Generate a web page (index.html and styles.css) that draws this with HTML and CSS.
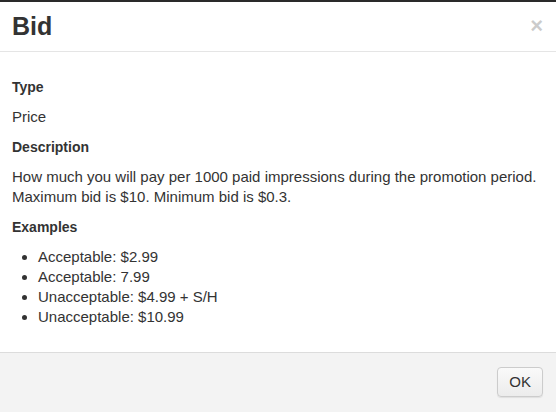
FILE: index.html
```html
<!DOCTYPE html>
<html>
<head>
<meta charset="utf-8">
<link rel="stylesheet" href="styles.css">
</head>
<body>
<div class="modal">
  <div class="modal-header">
    <h3 class="modal-title">Bid</h3>
    <button class="close" type="button">×</button>
  </div>
  <div class="modal-body">
    <div class="label">Type</div>
    <p>Price</p>
    <div class="label">Description</div>
    <p>How much you will pay per 1000 paid impressions during the promotion period. Maximum bid is $10. Minimum bid is $0.3.</p>
    <div class="label">Examples</div>
    <ul>
      <li>Acceptable: $2.99</li>
      <li>Acceptable: 7.99</li>
      <li>Unacceptable: $4.99 + S/H</li>
      <li>Unacceptable: $10.99</li>
    </ul>
  </div>
  <div class="modal-footer">
    <button class="btn" type="button">OK</button>
  </div>
</div>
</body>
</html>
```
FILE: styles.css
```css
html, body {
  margin: 0;
  padding: 0;
  height: 100%;
}
body {
  background: #2a2a2a;
  font-family: "Liberation Sans", Arial, sans-serif;
  font-size: 15px;
  line-height: 20px;
  color: #333;
  overflow: hidden;
}
.modal {
  margin-top: 2px;
  background: #fff;
  display: flex;
  flex-direction: column;
  height: calc(100% - 2px);
}
.modal-header {
  display: flex;
  justify-content: space-between;
  align-items: flex-start;
  padding: 10px 13px 10px 12px;
  border-bottom: 1px solid #e5e5e5;
}
.modal-title {
  margin: 0;
  font-size: 25px;
  line-height: 29px;
  font-weight: bold;
  color: #333;
}
.close {
  background: none;
  border: 0;
  padding: 0;
  margin-top: 3px;
  font-family: "Liberation Sans", Arial, sans-serif;
  font-size: 22px;
  font-weight: bold;
  line-height: 1;
  color: #000;
  opacity: 0.2;
}
.modal-body {
  padding: 25px 12px 15px 12px;
}
.label {
  font-weight: bold;
  font-size: 14px;
  margin-bottom: 10px;
}
p {
  margin: 0 0 10px;
}
ul {
  margin: 0 0 10px;
  padding-left: 26px;
}
.modal-footer {
  flex: 1;
  background: #f3f3f3;
  border-top: 1px solid #dcdcdc;
  padding: 14px 13px 15px;
  display: flex;
  justify-content: flex-end;
  align-items: flex-start;
}
.btn {
  font-family: "Liberation Sans", Arial, sans-serif;
  font-size: 15px;
  line-height: 20px;
  color: #333;
  padding: 4px 11px;
  height: 30px;
  border: 1px solid #ccc;
  border-radius: 4px;
  background: linear-gradient(#fafafa, #ececec);
  box-shadow: 0 1px 1px rgba(0,0,0,0.08);
}
```
